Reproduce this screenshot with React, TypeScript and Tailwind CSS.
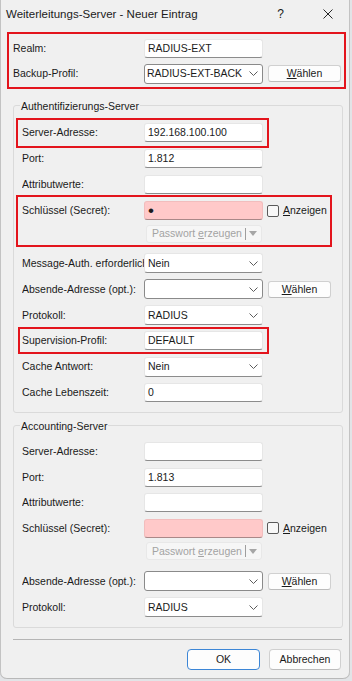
import React from "react";

function Chevron() {
  return (
    <svg width="9" height="5" viewBox="0 0 9 5" className="shrink-0">
      <path d="M0.5 0.5 L4.5 4.5 L8.5 0.5" fill="none" stroke="#5c5c5c" strokeWidth="1" />
    </svg>
  );
}

function TextField({ value = "", pink = false, secret = false }: { value?: string; pink?: boolean; secret?: boolean }) {
  return (
    <div
      className={
        pink
          ? "w-[119px] h-[19px] shrink-0 rounded-[3px] border border-[#f2bdbd] border-b-[#a88] bg-[#ffc9c9] flex items-center pl-[3px]"
          : "w-[119px] h-[19px] shrink-0 rounded-[3px] border border-[#e6e6e6] border-b-[#8c8c8c] bg-white flex items-center pl-[3px]"
      }
    >
      {secret ? <span className="text-[17px] leading-[12px]">•</span> : <span className="whitespace-nowrap">{value}</span>}
    </div>
  );
}

function Combo({ value = "", bordered = false }: { value?: string; bordered?: boolean }) {
  return (
    <div
      className={
        bordered
          ? "w-[119px] h-[20px] shrink-0 rounded-[3px] border border-[#8a8a8a] bg-white flex items-center pl-[2px] pr-[4px]"
          : "w-[119px] h-[20px] shrink-0 rounded-[3px] border border-[#e6e6e6] border-b-[#8c8c8c] bg-white flex items-center pl-[3px] pr-[4px]"
      }
    >
      <span className="whitespace-nowrap overflow-hidden">{value}</span>
      <span className="ml-auto flex items-center">
        <Chevron />
      </span>
    </div>
  );
}

function Waehlen({ wide = false }: { wide?: boolean }) {
  return (
    <div
      className={
        wide
          ? "ml-[5px] w-[73px] h-[17px] shrink-0 rounded-[3px] border border-[#d0d0d0] border-b-[#bcbcbc] bg-[#fdfdfd] flex items-center justify-center"
          : "ml-[5px] w-[63px] h-[17px] shrink-0 rounded-[3px] border border-[#d0d0d0] border-b-[#bcbcbc] bg-[#fdfdfd] flex items-center justify-center"
      }
    >
      <span>
        <span className="underline">W</span>ählen
      </span>
    </div>
  );
}

function Anzeigen() {
  return (
    <div className="ml-[4px] flex items-center">
      <div className="w-[12px] h-[12px] rounded-[2px] border border-[#5a5a5a] bg-[#f8f8f8]" />
      <span className="ml-[4px]">
        <span className="underline">A</span>nzeigen
      </span>
    </div>
  );
}

function PwButton() {
  return (
    <div className="ml-[146px] w-[116px] h-[18px] rounded-[3px] border border-[#e8e8e8] bg-[#f6f6f6] flex items-center pl-[5px] pr-[3px] text-[#a3a3a3]">
      <span className="whitespace-nowrap">
        Passwort <span className="underline">e</span>rzeugen
      </span>
      <span className="ml-auto w-px h-[12px] bg-[#9e9e9e]" />
      <svg width="8" height="5" viewBox="0 0 8 5" className="ml-[3px] mr-[1px]">
        <path d="M0 0 L8 0 L4 5 Z" fill="#a6a6a6" />
      </svg>
    </div>
  );
}

function Row({ label, h, children, top = false }: { label: string; h: string; children?: React.ReactNode; top?: boolean }) {
  return (
    <div className={"flex items-center shrink-0 " + h}>
      <div className={top ? "w-[131px] shrink-0 overflow-hidden whitespace-nowrap" : "w-[122px] shrink-0 overflow-hidden whitespace-nowrap"}>
        {label}
      </div>
      {children}
    </div>
  );
}

export default function App() {
  return (
    <div className="w-[352px] h-[681px] bg-[#e2e4e7] font-[family-name:Liberation_Sans,Arial,sans-serif] text-[10.5px] leading-[13px] text-[#1a1a1a]">
      <div className="relative w-[350px] h-[679px] bg-[#f0f0f0] rounded-b-[7px] shadow-[inset_1px_0_0_#c3c3c3,inset_-1px_0_0_#c3c3c3,inset_0_-1px_0_#b8b8b8] flex flex-col">
        {/* Title bar */}
        <div className="h-[28px] shrink-0 flex items-center pl-[6px] pr-[17px]">
          <span className="text-[11.5px] text-[#1b1b1b] whitespace-nowrap">Weiterleitungs-Server - Neuer Eintrag</span>
          <span className="ml-auto text-[12px] leading-[14px]">?</span>
          <svg className="ml-[39px]" width="10" height="10" viewBox="0 0 10 10">
            <path d="M0.5 0.5 L9.5 9.5 M9.5 0.5 L0.5 9.5" stroke="#262626" strokeWidth="1" fill="none" />
          </svg>
        </div>

        {/* Top section */}
        <div className="mt-[7px] pl-[13px] shrink-0">
          <Row top label="Realm:" h="h-[26px]">
            <TextField value="RADIUS-EXT" />
          </Row>
          <Row top label="Backup-Profil:" h="h-[25px]">
            <Combo bordered value="RADIUS-EXT-BACK" />
            <Waehlen wide />
          </Row>
        </div>

        {/* Authentifizierungs-Server */}
        <div className="relative mt-[19px] ml-[13px] w-[330px] shrink-0 rounded-[3px] border border-[#dadada] pl-[8px] pt-[13px] pb-[7px]">
          <span className="absolute left-[6px] top-[-7px] px-[1px] bg-[#f0f0f0] leading-[14px] whitespace-nowrap">Authentifizierungs-Server</span>
          <Row label="Server-Adresse:" h="h-[26px]">
            <TextField value="192.168.100.100" />
          </Row>
          <Row label="Port:" h="h-[26px]">
            <TextField value="1.812" />
          </Row>
          <Row label="Attributwerte:" h="h-[26px]">
            <TextField />
          </Row>
          <Row label="Schlüssel (Secret):" h="h-[27px]">
            <TextField pink secret />
            <Anzeigen />
          </Row>
          <div className="h-[19px] flex items-center">
            <div className="-ml-[22px]">
              <PwButton />
            </div>
          </div>
          <div className="h-[7px]" />
          <Row label="Message-Auth. erforderlich" h="h-[26px]">
            <Combo value="Nein" />
          </Row>
          <Row label="Absende-Adresse (opt.):" h="h-[26px]">
            <Combo bordered />
            <Waehlen />
          </Row>
          <Row label="Protokoll:" h="h-[26px]">
            <Combo value="RADIUS" />
          </Row>
          <Row label="Supervision-Profil:" h="h-[25px]">
            <TextField value="DEFAULT" />
          </Row>
          <Row label="Cache Antwort:" h="h-[27px]">
            <Combo value="Nein" />
          </Row>
          <Row label="Cache Lebenszeit:" h="h-[25px]">
            <TextField value="0" />
          </Row>
        </div>

        {/* Accounting-Server */}
        <div className="relative mt-[12px] ml-[13px] w-[330px] shrink-0 rounded-[3px] border border-[#dadada] pl-[8px] pt-[12px] pb-[7px]">
          <span className="absolute left-[6px] top-[-7px] px-[1px] bg-[#f0f0f0] leading-[14px] whitespace-nowrap">Accounting-Server</span>
          <Row label="Server-Adresse:" h="h-[26px]">
            <TextField />
          </Row>
          <Row label="Port:" h="h-[26px]">
            <TextField value="1.813" />
          </Row>
          <Row label="Attributwerte:" h="h-[25px]">
            <TextField />
          </Row>
          <Row label="Schlüssel (Secret):" h="h-[26px]">
            <TextField pink />
            <Anzeigen />
          </Row>
          <div className="h-[20px] flex items-center">
            <div className="-ml-[22px]">
              <PwButton />
            </div>
          </div>
          <div className="h-[7px]" />
          <Row label="Absende-Adresse (opt.):" h="h-[26px]">
            <Combo bordered />
            <Waehlen />
          </Row>
          <Row label="Protokoll:" h="h-[26px]">
            <Combo value="RADIUS" />
          </Row>
        </div>

        {/* Separator */}
        <div className="mt-[11px] ml-[13px] w-[329px] h-px bg-[#b5b5b5] shrink-0" />

        {/* Buttons */}
        <div className="mt-[9px] flex justify-end gap-[9px] pr-[9px] shrink-0">
          <div className="w-[73px] h-[21px] rounded-[4px] border-[1.5px] border-[#3c86d6] bg-[#fdfdfd] flex items-center justify-center">OK</div>
          <div className="w-[72px] h-[21px] rounded-[4px] border border-[#d0d0d0] border-b-[#bcbcbc] bg-[#fdfdfd] flex items-center justify-center">Abbrechen</div>
        </div>

        {/* Red annotation boxes */}
        <div className="absolute left-[7px] top-[32px] w-[339px] h-[57px] border-2 border-[#e3141c] pointer-events-none" />
        <div className="absolute left-[16px] top-[118px] w-[253px] h-[30px] border-2 border-[#e3141c] pointer-events-none" />
        <div className="absolute left-[16px] top-[195px] w-[316px] h-[52px] border-2 border-[#e3141c] pointer-events-none" />
        <div className="absolute left-[18px] top-[327px] w-[251px] h-[27px] border-2 border-[#e3141c] pointer-events-none" />
      </div>
    </div>
  );
}
